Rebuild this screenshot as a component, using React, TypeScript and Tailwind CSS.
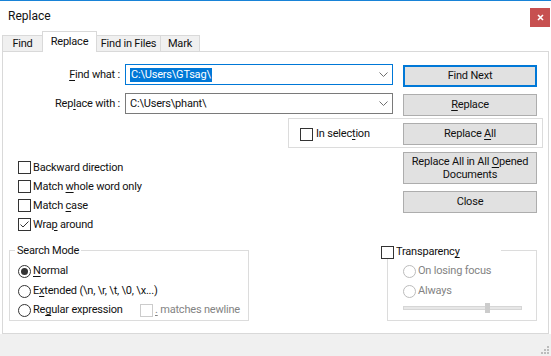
import clsx from "clsx";
import type { ReactNode } from "react";

function CheckBox({ checked = false, disabled = false }: { checked?: boolean; disabled?: boolean }) {
  return (
    <span
      className={clsx(
        "w-[13px] h-[13px] shrink-0 border bg-white flex items-center justify-center",
        disabled ? "border-[#cccccc]" : "border-[#333333]"
      )}
    >
      {checked && (
        <svg width="11" height="11" viewBox="0 0 11 11">
          <path d="M1.5 5.5 L4 8 L9.5 2.5" fill="none" stroke="#333333" strokeWidth="1" />
        </svg>
      )}
    </span>
  );
}

function Radio({ checked = false, disabled = false }: { checked?: boolean; disabled?: boolean }) {
  return (
    <span
      className={clsx(
        "w-[13px] h-[13px] shrink-0 rounded-full border bg-white flex items-center justify-center",
        disabled ? "border-[#bcbcbc]" : "border-[#333333]"
      )}
    >
      {checked && <span className="w-[7px] h-[7px] rounded-full bg-[#333333]" />}
    </span>
  );
}

function U({ children }: { children: ReactNode }) {
  return <span className="underline underline-offset-2">{children}</span>;
}

function Btn({
  children,
  primary = false,
  className,
}: {
  children: ReactNode;
  primary?: boolean;
  className?: string;
}) {
  return (
    <div
      className={clsx(
        "w-[134px] shrink-0 flex items-center justify-center bg-[#e1e1e1] text-center",
        primary ? "border-2 border-[#0078d7]" : "border border-[#adadad]",
        className
      )}
    >
      {children}
    </div>
  );
}

function Chevron() {
  return (
    <svg className="ml-auto mr-[4px]" width="9" height="5" viewBox="0 0 9 5">
      <path d="M0.5 0.5 L4.5 4.5 L8.5 0.5" fill="none" stroke="#707070" strokeWidth="1" />
    </svg>
  );
}

function CheckRow({ checked = false, children }: { checked?: boolean; children: ReactNode }) {
  return (
    <div className="h-[19px] flex items-center">
      <CheckBox checked={checked} />
      <span className="ml-[2px]">{children}</span>
    </div>
  );
}

export default function App() {
  return (
    <div className="w-[551px] h-[356px] bg-white border-t border-[#1883d7] flex flex-col overflow-hidden font-['Roboto','Liberation_Sans',sans-serif] text-[11px] leading-[14px] tracking-[-0.2px] text-[#111111]">
      {/* Title bar */}
      <div className="h-[30px] shrink-0 flex items-start pl-[8px] pr-[1px]">
        <span className="mt-[8px] text-[12px] tracking-normal">Replace</span>
        <div className="ml-auto mt-[7px] w-[20px] h-[19px] bg-[#c75050] flex items-center justify-center">
          <svg width="7" height="7" viewBox="0 0 7 7">
            <path d="M1 1 L6 6 M6 1 L1 6" stroke="white" strokeWidth="1.6" />
          </svg>
        </div>
      </div>

      {/* Tabs */}
      <div className="relative z-10 h-[21px] shrink-0 ml-[2px] flex items-end">
        <div className="w-[41px] h-[16px] mb-px bg-[#f0f0f0] border-l border-t border-r border-[#d9d9d9] flex items-center justify-center">
          Find
        </div>
        <div className="relative z-10 -ml-px w-[55px] h-[21px] bg-white border-l border-t border-r border-[#d9d9d9] flex items-center justify-center">
          Replace
        </div>
        <div className="-ml-px w-[65px] h-[16px] mb-px bg-[#f0f0f0] border-l border-t border-r border-[#d9d9d9] flex items-center justify-center">
          Find in Files
        </div>
        <div className="-ml-px w-[40px] h-[16px] mb-px bg-[#f0f0f0] border-l border-t border-r border-[#d9d9d9] flex items-center justify-center">
          Mark
        </div>
      </div>

      {/* Tab panel */}
      <div className="-mt-px ml-[2px] w-[547px] h-[283px] shrink-0 border border-[#d9d9d9] bg-white flex flex-col">
        {/* Find what */}
        <div className="mt-[12px] flex items-start">
          <div className="w-[117px] h-[21px] flex items-center justify-end">
            <span>
              <U>F</U>ind what :
            </span>
          </div>
          <div className="ml-[5px] w-[268px] h-[21px] border border-[#0078d7] flex items-center pl-[4px]">
            <span className="bg-[#0078d7] text-white px-px h-[14px]">{"C:\\Users\\GTsag\\"}</span>
            <Chevron />
          </div>
          <Btn primary className="ml-[10px] mt-px h-[22px]">
            Find Next
          </Btn>
        </div>

        {/* Replace with */}
        <div className="mt-[6px] flex items-start">
          <div className="w-[117px] h-[21px] flex items-center justify-end">
            <span>
              Rep<U>l</U>ace with :
            </span>
          </div>
          <div className="ml-[5px] w-[268px] h-[21px] border border-[#7a7a7a] flex items-center pl-[4px]">
            <span>{"C:\\Users\\phant\\"}</span>
            <Chevron />
          </div>
          <Btn className="ml-[10px] mt-px h-[22px]">
            <span>
              <U>R</U>eplace
            </span>
          </Btn>
        </div>

        {/* In selection box */}
        <div className="mt-[2px] ml-[285px] w-[255px] h-[30px] border border-[#dcdcdc] flex items-start pl-[11px] pr-[5px] pt-[4px]">
          <div className="h-[22px] flex items-center">
            <CheckBox />
            <span className="ml-[3px]">
              In selec<U>t</U>ion
            </span>
          </div>
          <Btn className="ml-auto h-[22px]">
            <span>
              Replace <U>A</U>ll
            </span>
          </Btn>
        </div>

        {/* Options + buttons */}
        <div className="flex items-start">
          <div className="w-[400px] mt-[10px] pl-[15px] flex flex-col">
            <CheckRow>Backward direction</CheckRow>
            <CheckRow>
              Match <U>w</U>hole word only
            </CheckRow>
            <CheckRow>
              Match <U>c</U>ase
            </CheckRow>
            <CheckRow checked>
              Wra<U>p</U> around
            </CheckRow>
          </div>
          <div className="mt-[4px] flex flex-col gap-[7px]">
            <Btn className="h-[32px] leading-[13px]">
              <span>
                Replace All in All <U>O</U>pened
                <br />
                Documents
              </span>
            </Btn>
            <Btn className="h-[22px]">Close</Btn>
          </div>
        </div>

        {/* Group boxes */}
        <div className="mt-[16px] flex items-start">
          <div className="relative ml-[6px] w-[240px] h-[71px] border border-[#dcdcdc] pt-[10px] pl-[8px]">
            <span className="absolute left-[5px] -top-[7px] bg-white px-[2px]">Search Mode</span>
            <div className="h-[20px] flex items-center">
              <Radio checked />
              <span className="ml-[2px]">
                <U>N</U>ormal
              </span>
            </div>
            <div className="h-[20px] flex items-center">
              <Radio />
              <span className="ml-[2px]">
                E<U>x</U>tended {"(\\n, \\r, \\t, \\0, \\x...)"}
              </span>
            </div>
            <div className="h-[18px] flex items-center">
              <div className="w-[122px] flex items-center">
                <Radio />
                <span className="ml-[2px]">
                  Re<U>g</U>ular expression
                </span>
              </div>
              <CheckBox disabled />
              <span className="ml-[2px] text-[#838383]">
                <U>.</U> matches newline
              </span>
            </div>
          </div>

          <div className="relative ml-[138px] w-[150px] h-[71px] border border-[#dcdcdc] pt-[10px] pl-[15px]">
            <div className="absolute -left-[7px] -top-[6px] w-[120px] h-[14px] bg-white flex items-center">
              <CheckBox />
              <span className="ml-[2px]">
                Transparenc<U>y</U>
              </span>
            </div>
            <div className="h-[20px] flex items-center text-[#838383]">
              <Radio disabled />
              <span className="ml-[2px]">On losing focus</span>
            </div>
            <div className="h-[20px] flex items-center text-[#838383]">
              <Radio disabled />
              <span className="ml-[2px]">Always</span>
            </div>
            <div className="relative mt-[2px] w-[119px] h-[10px] flex items-center">
              <div className="w-full h-[4px] bg-[#e7e7e7] border border-[#d6d6d6]" />
              <div className="absolute left-[82px] top-0 w-[5px] h-[10px] bg-[#cccccc]" />
            </div>
          </div>
        </div>
      </div>

      {/* Bottom strip with size grip */}
      <div className="flex-1 bg-[#f0f0f0] flex items-end justify-end pr-px pb-px">
        <svg width="9" height="9" viewBox="0 0 9 9">
          <rect x="6" y="0" width="2" height="2" fill="#bcbcbc" />
          <rect x="3" y="3" width="2" height="2" fill="#bcbcbc" />
          <rect x="6" y="3" width="2" height="2" fill="#bcbcbc" />
          <rect x="0" y="6" width="2" height="2" fill="#bcbcbc" />
          <rect x="3" y="6" width="2" height="2" fill="#bcbcbc" />
          <rect x="6" y="6" width="2" height="2" fill="#bcbcbc" />
        </svg>
      </div>
    </div>
  );
}
